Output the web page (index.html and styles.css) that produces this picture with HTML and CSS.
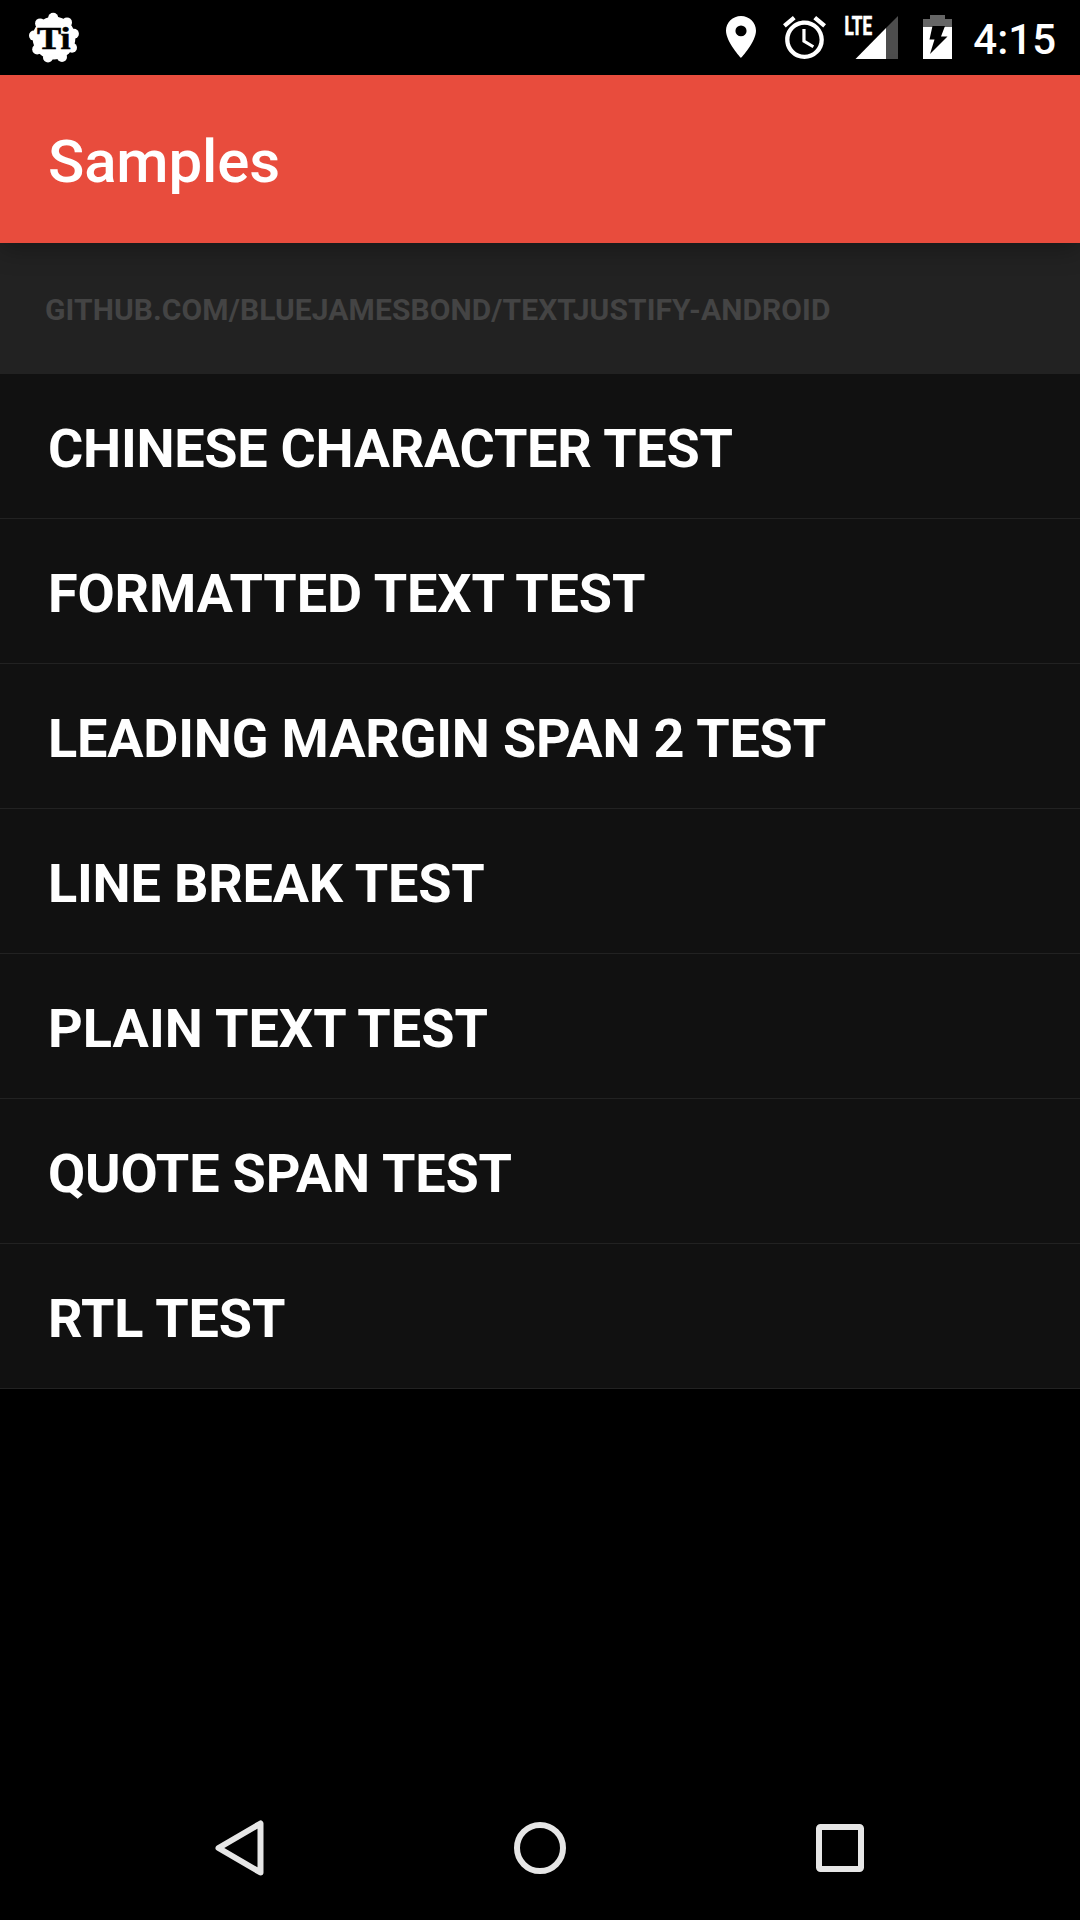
FILE: index.html
```html
<!DOCTYPE html>
<html lang="en">
<head>
<meta charset="utf-8">
<title>Samples</title>
<link rel="stylesheet" href="styles.css">
</head>
<body>
<div class="screen">
  <header class="status-bar">
    <svg class="icon-app" width="56" height="56" viewBox="-28 -28 56 56">
      <g fill="#fff">
        <circle r="21.4"/>
        <circle cx="-0.8" cy="-20.3" r="5"/>
        <circle cx="13" cy="-15.6" r="5"/>
        <circle cx="19.900" cy="-4.3" r="5"/>
        <circle cx="18" cy="9.8" r="5"/>
        <circle cx="8" cy="19" r="5"/>
        <circle cx="-6" cy="19.4" r="5"/>
        <circle cx="-16.800" cy="11.4" r="5"/>
        <circle cx="-20" cy="-2.4" r="5"/>
        <circle cx="-13.9" cy="-14.6" r="5"/>
      </g>
      <text class="app-letters" x="-17" y="11" textLength="33.5" lengthAdjust="spacingAndGlyphs">Ti</text>
    </svg>
    <div class="status-icons">
      <svg class="icon-location" width="30" height="42" viewBox="5 2 14 20" preserveAspectRatio="none">
        <path fill="#fff" d="M12 2C8.13 2 5 5.13 5 9c0 5.25 7 13 7 13s7-7.75 7-13c0-3.87-3.13-7-7-7zm0 9.7a2.6 2.6 0 1 1 0-5.2 2.6 2.6 0 0 1 0 5.2z"/>
      </svg>
      <svg class="icon-alarm" width="43" height="43" viewBox="2 1.86 20 20.14" preserveAspectRatio="none">
        <path fill="#fff" d="M22 5.72l-4.6-3.86-1.29 1.53 4.6 3.86L22 5.72zM7.88 3.39L6.6 1.86 2 5.71l1.29 1.53 4.59-3.85zM12.5 8H11v6l4.75 2.85.75-1.23-4-2.37V8zM12 4c-4.97 0-9 4.03-9 9s4.02 9 9 9a9 9 0 0 0 0-18zm0 16c-3.87 0-7-3.13-7-7s3.13-7 7-7 7 3.13 7 7-3.13 7-7 7z"/>
      </svg>
      <svg class="icon-signal" width="55" height="51" viewBox="-2 -8 55 51">
        <path fill="#4d4d4d" d="M53 0v43H41V12z"/>
        <path fill="#fff" d="M10.500 43L41 12v31z"/>
        <text class="lte" x="-0.5" y="19.300" textLength="27.5" lengthAdjust="spacingAndGlyphs">LTE</text>
      </svg>
      <svg class="icon-battery" width="29" height="44" viewBox="0 0 29 44">
        <path fill="#666" d="M7 0h15v4h7v8H0V4h7z"/>
        <path fill="#fff" d="M0 12h29v32H0z"/>
        <path fill="#000" d="M9.500 11h12.500l-4 10.500H24.500L7 39l4.500-14.500H6.500z"/>
      </svg>
      <span class="clock">4:15</span>
    </div>
  </header>
  <div class="app-bar"><h1 class="title">Samples</h1></div>
  <div class="banner">GITHUB.COM/BLUEJAMESBOND/TEXTJUSTIFY-ANDROID</div>
  <ul class="list">
    <li class="row row-chinese">CHINESE CHARACTER TEST</li>
    <li class="row row-formatted">FORMATTED TEXT TEST</li>
    <li class="row row-margin">LEADING MARGIN SPAN 2 TEST</li>
    <li class="row row-break">LINE BREAK TEST</li>
    <li class="row row-plain">PLAIN TEXT TEST</li>
    <li class="row row-quote">QUOTE SPAN TEST</li>
    <li class="row row-rtl">RTL TEST</li>
  </ul>
  <nav class="nav-bar">
    <svg width="60" height="60" viewBox="0 0 60 60"><path class="nav-shape" d="M50.500 5.500v49L8.500 30z"/></svg>
    <svg width="60" height="60" viewBox="0 0 60 60"><circle class="nav-shape" cx="30" cy="30" r="23"/></svg>
    <svg width="60" height="60" viewBox="0 0 60 60"><rect class="nav-shape" x="9" y="9" width="42" height="42" rx="1.5"/></svg>
  </nav>
</div>
</body>
</html>
```
FILE: styles.css
```css
* { box-sizing: border-box; }

body {
  margin: 0;
  background: #000;
  font-family: Roboto, sans-serif;
  color: #fff;
}

.screen {
  display: flex;
  flex-direction: column;
  width: 1080px;
  height: 1920px;
}

.status-bar {
  display: flex;
  justify-content: space-between;
  align-items: flex-start;
  height: 75px;
  padding: 0 24px 0 26px;
}

.icon-app { margin-top: 10px; }

.app-letters {
  font: bold 32px "Liberation Serif", serif;
  fill: #000;
  stroke: #000;
  stroke-width: 0.6;
}

.status-icons { display: flex; align-items: flex-start; }
.icon-location { margin: 16px 27px 0 0; }
.icon-alarm { margin: 16px 17px 0 0; }
.icon-signal { margin: 8px 25px 0 0; }
.icon-battery { margin: 15px 21px 0 0; }

.lte {
  font: bold 26px Roboto, sans-serif;
  fill: #fff;
  stroke: #fff;
  stroke-width: 0.7;
}

.clock {
  margin-top: 15px;
  font-size: 42px;
  line-height: 50px;
  font-weight: 500;
}

.app-bar {
  position: relative;
  height: 168px;
  padding: 52px 48px 0;
  background: #e84c3d;
  box-shadow: 0 6px 24px rgba(0, 0, 0, 0.3);
}

.title {
  margin: 0;
  font-size: 60px;
  line-height: 70px;
  font-weight: 500;
  letter-spacing: -0.15px;
}

.banner {
  height: 131px;
  padding-left: 45px;
  background: #222;
  color: #444;
  font-size: 30px;
  line-height: 134px;
  font-weight: 700;
  letter-spacing: 0.09px;
}

.list { margin: 0; padding: 0; list-style: none; }

.row {
  height: 145px;
  padding-left: 48px;
  background: #111;
  border-bottom: 1px solid #222;
  font-size: 54px;
  line-height: 150px;
  font-weight: 700;
}

.row-chinese { letter-spacing: -0.29px; }
.row-formatted { letter-spacing: -0.13px; }
.row-margin { letter-spacing: -0.19px; }
.row-break { letter-spacing: -0.2px; }
.row-plain { letter-spacing: 0.04px; }
.row-quote { letter-spacing: -0.16px; }
.row-rtl { letter-spacing: -0.12px; }

.nav-bar {
  display: flex;
  justify-content: center;
  align-items: center;
  gap: 240px;
  height: 144px;
  margin-top: auto;
}

.nav-shape {
  fill: none;
  stroke: #e6e6e6;
  stroke-width: 6;
  stroke-linejoin: round;
}
```
